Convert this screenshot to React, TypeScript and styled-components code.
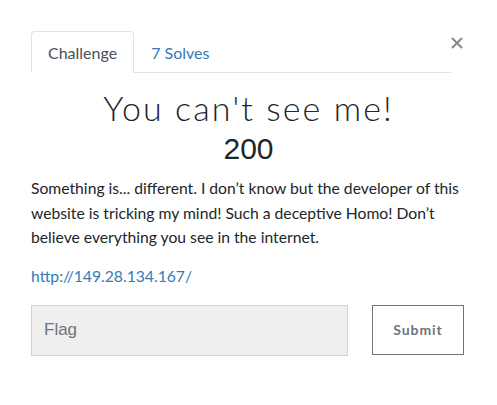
import React from "react";
import styled, { createGlobalStyle } from "styled-components";

const Global = createGlobalStyle`
  html, body { margin: 0; padding: 0; background: #fff; }
  body { font-family: Lato, "Open Sans", sans-serif; color: #212529; }
  * { box-sizing: border-box; }
`;

const Modal = styled.div`
  width: 497px;
  height: 405px;
  padding: 31px 20px 0 31px;
  display: flex;
  flex-direction: column;
  position: relative;
`;

const Close = styled.button`
  position: absolute;
  top: 31px;
  right: 32px;
  border: none;
  background: none;
  padding: 0;
  width: 16px;
  height: 24px;
  display: flex;
  align-items: center;
  justify-content: center;
  cursor: pointer;
`;

const Tabs = styled.div`
  display: flex;
  width: 420px;
  border-bottom: 1px solid #dee2e6;
  height: 42px;
`;

const Tab = styled.div<{ $active?: boolean }>`
  font-family: Lato, sans-serif;
  font-size: 16px;
  padding: 0 16px;
  height: 42px;
  margin-bottom: -1px;
  display: flex;
  align-items: center;
  color: ${(p) => (p.$active ? "#495057" : "#337ab7")};
  background: ${(p) => (p.$active ? "#fff" : "transparent")};
  border: 1px solid ${(p) => (p.$active ? "#dee2e6" : "transparent")};
  border-bottom-color: ${(p) => (p.$active ? "#fff" : "transparent")};
  border-radius: 4px 4px 0 0;
`;

const Title = styled.h3`
  margin: 14px 0 0;
  width: 435px;
  text-align: center;
  font-family: Lato, sans-serif;
  font-weight: 300;
  font-size: 34px;
  letter-spacing: 2.1px;
  line-height: 42px;
  color: #212529;
`;

const Value = styled.h4`
  margin: 3px 0 0;
  width: 435px;
  text-align: center;
  font-family: "Liberation Sans", Arial, sans-serif;
  font-weight: 400;
  font-size: 30px;
  line-height: 34px;
  color: #212529;
`;

const Description = styled.p`
  margin: 10px 0 0;
  font-family: Lato, sans-serif;
  font-size: 15.7px;
  line-height: 24.5px;
  color: #212529;
  width: 442px;
`;

const Link = styled.a`
  display: block;
  margin-top: 14px;
  font-family: Lato, sans-serif;
  font-size: 15.7px;
  line-height: 24px;
  color: #337ab7;
  text-decoration: none;
`;

const Row = styled.div`
  display: flex;
  gap: 24px;
  margin-top: 17px;
  align-items: flex-start;
`;

const Input = styled.input`
  width: 317px;
  height: 51px;
  background: #efefef;
  border: 1px solid #ced4da;
  border-radius: 0;
  padding: 0 12px;
  font-family: "Liberation Sans", Arial, sans-serif;
  font-size: 17px;
  color: #495057;
  outline: none;
  &::placeholder { color: #6c757d; }
`;

const SubmitButton = styled.button`
  width: 92px;
  height: 50px;
  background: #fff;
  border: 1px solid #6c757d;
  border-radius: 0;
  font-family: Lato, sans-serif;
  font-weight: 700;
  font-size: 14px;
  letter-spacing: 0.9px;
  color: #6c757d;
  cursor: pointer;
`;

export default function App() {
  return (
    <>
      <Global />
      <Modal>
        <Close aria-label="Close">
          <svg width="12" height="12" viewBox="0 0 12 12">
            <path d="M1 1 L11 11 M11 1 L1 11" stroke="#888" strokeWidth="2" />
          </svg>
        </Close>
        <Tabs>
          <Tab $active>Challenge</Tab>
          <Tab>7 Solves</Tab>
        </Tabs>
        <Title>You can't see me!</Title>
        <Value>200</Value>
        <Description>
          Something is... different. I don’t know but the developer of this website is tricking my mind! Such a deceptive Homo! Don’t believe everything you see in the internet.
        </Description>
        <Link href="#">http://149.28.134.167/</Link>
        <Row>
          <Input placeholder="Flag" />
          <SubmitButton>Submit</SubmitButton>
        </Row>
      </Modal>
    </>
  );
}
